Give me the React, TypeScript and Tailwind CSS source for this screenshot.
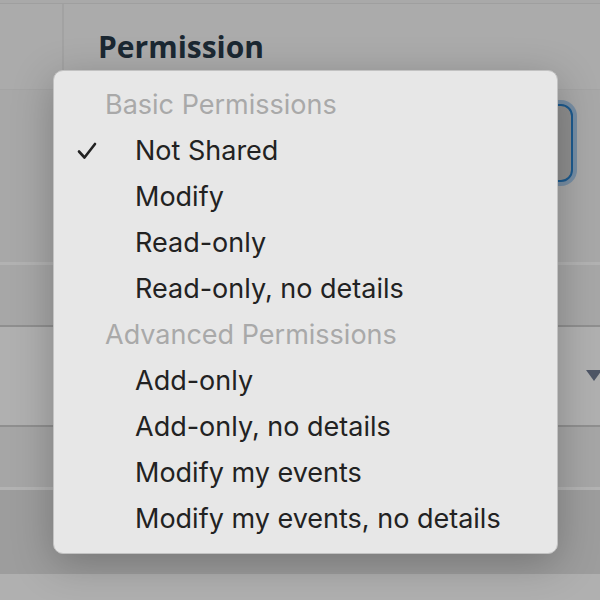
import React from 'react';

const sections = [
  {
    title: 'Basic Permissions',
    items: ['Not Shared', 'Modify', 'Read-only', 'Read-only, no details'],
  },
  {
    title: 'Advanced Permissions',
    items: ['Add-only', 'Add-only, no details', 'Modify my events', 'Modify my events, no details'],
  },
];

const selected = 'Not Shared';

const App = () => {
  return (
    <div className="relative w-[600px] h-[600px] overflow-hidden bg-[#ababab] font-['Inter',sans-serif]">
      {/* Table behind the backdrop */}
      <div className="flex flex-col h-full">
        <div className="h-[3px] bg-[#a9a9a9]" />
        <div className="flex h-[87px] border-t border-[#9f9f9f] border-b border-b-[#a4a4a4]">
          <div className="w-[64px] border-r-2 border-[#a2a2a2]" />
          <div className="pl-[34px] pt-[28px] text-[30px] font-bold text-[#1b2832] font-['Open_Sans',sans-serif] leading-none">
            Permission
          </div>
        </div>
        <div className="flex h-[175px] items-start justify-end border-b-[3px] border-[#b2b2b2] bg-[#a8a8a8]">
          <div className="mt-[14px] mr-[27px] w-[300px] h-[78px] rounded-[12px] border-2 border-[#1c5a8e] bg-[#8f8f8f] shadow-[0_0_0_4px_rgba(60,110,160,0.45)]" />
        </div>
        <div className="h-[62px] border-b-2 border-[#8f8f8f] bg-[#a7a7a7]" />
        <div className="flex h-[100px] items-center justify-end border-b-2 border-[#8f8f8f] bg-[#b0b0b0]">
          <svg width="16" height="11" viewBox="0 0 16 11" className="-mr-[2px] mt-[-2px]">
            <path d="M0 0 H16 L8 11 Z" fill="#4e5666" />
          </svg>
        </div>
        <div className="h-[63px] border-b-[3px] border-[#b3b3b3] bg-[#a6a6a6]" />
        <div className="h-[84px] bg-[#9d9d9d]" />
        <div className="flex-1 bg-[#b0b0b0]" />
      </div>

      {/* Dropdown menu */}
      <div className="absolute left-[53px] top-[70px] w-[505px] rounded-[10px] border border-[#c2c2c2] bg-[#e7e7e7] py-[11px] shadow-[0_10px_40px_rgba(0,0,0,0.25)] font-['Inter',sans-serif]">
        {sections.map((section) => (
          <div key={section.title}>
            <div className="h-[46px] flex items-center pl-[51px] text-[27px] text-[#a9a9a9]">
              {section.title}
            </div>
            {section.items.map((item) => (
              <div key={item} className="relative h-[46px] flex items-center pl-[81px] text-[27px] text-[#222222]">
                {item === selected && (
                  <svg
                    width="20"
                    height="18"
                    viewBox="0 0 20 18"
                    className="absolute left-[23px] top-[14px]"
                  >
                    <path d="M2 9.5 L7.5 15.5 L18 2" fill="none" stroke="#222222" strokeWidth="2.6" strokeLinecap="round" strokeLinejoin="round" />
                  </svg>
                )}
                {item}
              </div>
            ))}
          </div>
        ))}
      </div>
    </div>
  );
};

export default App;
